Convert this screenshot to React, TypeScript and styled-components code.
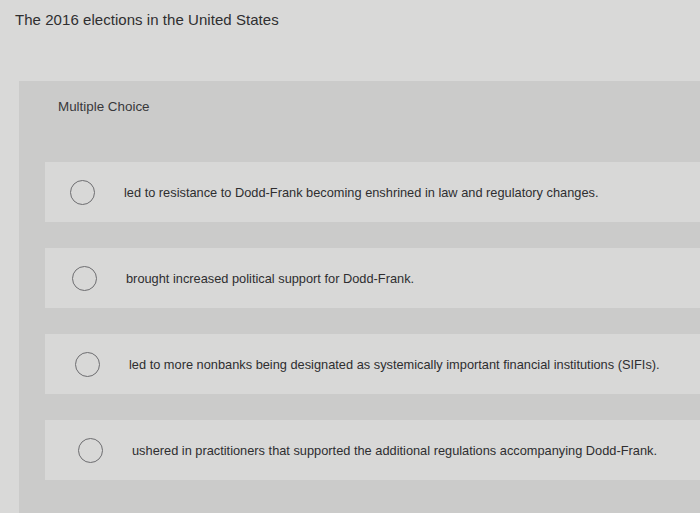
import React from "react";
import styled, { createGlobalStyle } from "styled-components";

const Global = createGlobalStyle`
  html, body { margin: 0; padding: 0; background: #d9d9d8; }
  body { width: 700px; height: 513px; overflow: hidden; }
`;

const Page = styled.div`
  width: 700px;
  height: 513px;
  background: #d9d9d8;
  display: flex;
  flex-direction: column;
  font-family: "Liberation Sans", Arial, sans-serif;
  overflow: hidden;
`;

const Title = styled.h1`
  margin: 0;
  padding: 11px 0 0 15px;
  height: 81px;
  box-sizing: border-box;
  flex: none;
  font-size: 15px;
  font-weight: 400;
  color: #2f2f30;
  letter-spacing: 0.05px;
`;

const Panel = styled.section`
  flex: 1;
  margin-left: 19px;
  background: #cbcbca;
  padding: 18px 0 0 0;
  display: flex;
  flex-direction: column;
`;

const Label = styled.div`
  padding-left: 39px;
  height: 63px;
  font-family: "Liberation Sans", Arial, sans-serif;
  font-size: 13.4px;
  color: #38383a;
`;

const Options = styled.div`
  display: flex;
  flex-direction: column;
  gap: 26px;
  padding-left: 26px;
`;

const Row = styled.label<{ $shift: number }>`
  height: 60px;
  background: #d8d8d7;
  display: flex;
  align-items: center;
  padding-left: ${(p) => 25 + p.$shift}px;
  gap: 29px;
  cursor: pointer;
`;

const Radio = styled.span`
  width: 23px;
  height: 23px;
  border: 1.6px solid #6d6d70;
  border-radius: 50%;
  flex: none;
`;

const Text = styled.span`
  font-family: "Liberation Sans", Arial, sans-serif;
  font-size: 12.8px;
  color: #2e2e30;
  padding-top: 1px;
`;

const options = [
  "led to resistance to Dodd-Frank becoming enshrined in law and regulatory changes.",
  "brought increased political support for Dodd-Frank.",
  "led to more nonbanks being designated as systemically important financial institutions (SIFIs).",
  "ushered in practitioners that supported the additional regulations accompanying Dodd-Frank.",
];

export default function App() {
  return (
    <Page>
      <Global />
      <Title>The 2016 elections in the United States</Title>
      <Panel>
        <Label>Multiple Choice</Label>
        <Options>
          {options.map((o, i) => (
            <Row key={i} $shift={[0, 2, 5, 8][i]}>
              <Radio />
              <Text>{o}</Text>
            </Row>
          ))}
        </Options>
      </Panel>
    </Page>
  );
}
